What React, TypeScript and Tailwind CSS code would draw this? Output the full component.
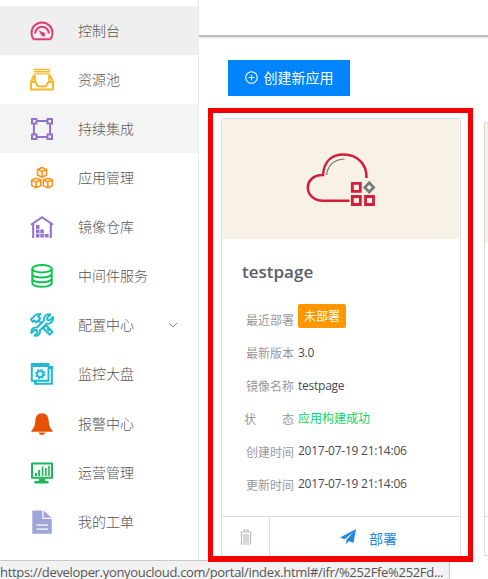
import type { ReactNode } from "react";

const line = { fill: "none", stroke: "currentColor", strokeWidth: 2 };

function Icon({ children, className }: { children: ReactNode; className: string }) {
  return (
    <svg viewBox="0 0 24 24" className={`h-6 w-6 shrink-0 ${className}`}>
      {children}
    </svg>
  );
}

const Cube = ({ x, y }: { x: number; y: number }) => (
  <path
    transform={`translate(${x} ${y})`}
    d="M5.2 .8 9.8 2.6V8.2L5.2 10.4.7 8.2V2.6ZM.7 2.6 5.2 4.700 9.8 2.6M5.2 4.700V10.200"
    fill="none"
    stroke="currentColor"
    strokeWidth="1.600"
    strokeLinejoin="round"
  />
);

const items: { label: string; bg?: string; arrow?: boolean; icon: ReactNode }[] = [
  {
    label: "控制台",
    bg: "bg-[#efefef]",
    icon: (
      <Icon className="text-[#df3f78]">
        <path {...line} d="M3.6 20.2A10.6 10.6 0 0 1 1.5 14a10.5 10.5 0 0 1 21 0 10.6 10.6 0 0 1-2.1 6.2Z" strokeLinejoin="round" />
        <path {...line} d="M5.2 14.500a6.8 6.8 0 0 1 13.6 0" />
        <path d="m8.5 11.2 4.6 2.1a2.1 2.1 0 1 1-1.9 2.8Z" fill="currentColor" />
      </Icon>
    ),
  },
  {
    label: "资源池",
    icon: (
      <Icon className="text-[#f5ba2b]">
        <path {...line} strokeWidth="1.4" d="M4 1.500h16M4 3.700h16M4 5.900h16" />
        <path {...line} d="M4.200 7 1 14v7.500h22V14L19.800 7M1 14h4.500c1 0 .8 4.500 4 4.500h5c3.200 0 3-4.500 4-4.500H23M4.800 7v6.500M19.200 7v6.500" strokeLinejoin="round" />
      </Icon>
    ),
  },
  {
    label: "持续集成",
    bg: "bg-[#f4f4f4]",
    icon: (
      <Icon className="text-[#9072cc]">
        <path {...line} d="M6.500 3.900h11M6.500 20h11M3.900 6.500v11M20.100 6.500v11" />
        <path {...line} d="M2 2h4.500v4.500H2ZM17.500 2H22v4.500h-4.500ZM2 17.500h4.500V22H2ZM17.500 17.500H22V22h-4.500Z" />
      </Icon>
    ),
  },
  {
    label: "应用管理",
    icon: (
      <Icon className="text-[#fa9317]">
        <Cube x={6.8} y={0.8} />
        <Cube x={1} y={11.4} />
        <Cube x={12.6} y={11.4} />
      </Icon>
    ),
  },
  {
    label: "镜像仓库",
    icon: (
      <Icon className="text-[#9072cc]">
        <path {...line} d="M1 9.800 12 2.200l11 7.600M3.200 9v14M20.800 9v14" />
        <path d="M6 10h3.500v3.700H6ZM6 14.600h3.500V18.200H6ZM10.300 14.600h3.500V18.200h-3.500ZM6 19.100h3.500v3.500H6ZM10.300 19.100h3.500v3.500h-3.500ZM14.700 19.100h3.900v3.500h-3.900Z" fill="currentColor" />
      </Icon>
    ),
  },
  {
    label: "中间件服务",
    icon: (
      <Icon className="text-[#0fc552]">
        <ellipse cx="12" cy="4.800" rx="9.700" ry="3.700" {...line} />
        <path {...line} d="M2.300 4.800v14.300c0 5 19.400 5 19.400 0V4.800M2.300 9.700c0 5 19.400 5 19.400 0M2.300 14.400c0 5 19.400 5 19.400 0" />
      </Icon>
    ),
  },
  {
    label: "配置中心",
    arrow: true,
    icon: (
      <Icon className="text-[#20b9d1]">
        <path {...line} strokeWidth="1.900" strokeLinejoin="round" d="M1 6.500 5.500 1.800 10.500 1 8.200 3.500l2 2-4 4-2-2-1.500 1.300ZM9 8l3 3M14.500 14l2-1.500 6 6.500-2.700 2.700-6.200-6ZM17 15.500l2.500 2.700" />
        <path {...line} strokeWidth="1.900" strokeLinejoin="round" d="M20.500 1.500 17 5l.5 2 2 .5L23 4c.5 4-2 7.300-6 6.500L9.800 17.500c.8 3.500-2 6-5.300 5.200L7.500 19.500 7 17.200l-2.300-.5L1.500 20c-.8-3.500 1.800-6.300 5.400-5.500L14 7.500c-.8-4 2.500-7 6.500-6Z" />
      </Icon>
    ),
  },
  {
    label: "监控大盘",
    icon: (
      <Icon className="text-[#20b9d1]">
        <path {...line} d="M1.800 2.200h16.700v16.600H1.800ZM5 21.800h16.800V5" />
        <path d="M1 1h18v4H1ZM19 4h4v3h-4ZM4 19h3v3.500H4Z" fill="currentColor" />
        <circle cx="10.200" cy="12" r="3.100" {...line} />
        <circle cx="10.200" cy="12" r="4.500" {...line} strokeWidth="1.400" strokeDasharray="1.900 1.634" />
      </Icon>
    ),
  },
  {
    label: "报警中心",
    icon: (
      <Icon className="text-[#e75106]">
        <path d="M12 1.300C7.500 1.300 5.500 4.800 5.300 9c-.2 4.500-1.300 6.500-4 10v.7h21.400V19c-2.700-3.500-3.800-5.500-4-10-.2-4.200-2.200-7.700-6.700-7.700ZM8.500 20.500c.3 1.600 2 2.500 3.500 2.500s3.200-.9 3.500-2.500Z" fill="currentColor" />
      </Icon>
    ),
  },
  {
    label: "运营管理",
    icon: (
      <Icon className="text-[#19b758]">
        <path {...line} d="M2 2.500h20v14.200H2Z" strokeLinejoin="round" />
        <path d="M5 12h2v3H5ZM8.200 9h2v6h-2ZM11.800 5.500h1.600V15h-1.600ZM15 7h1.600v8H15ZM18.200 4.800h1.600V15h-1.600ZM9 17.500h6v2.500h3.500v2.500h-14V20H9Z" fill="currentColor" />
      </Icon>
    ),
  },
  {
    label: "我的工单",
    icon: (
      <Icon className="text-[#a0a5d8]">
        <path d="M2.300.5h10V9h9.500v14.800h-19.500V.5ZM13.500.5l8 7.200h-8ZM6.500 14.500v1.200h11.500v-1.200ZM6.500 18.600v1.200h11.500v-1.200Z" fill="currentColor" fillRule="evenodd" />
      </Icon>
    ),
  },
];

function CloudLogo() {
  return (
    <svg viewBox="0 0 70 56" className="h-[56px] w-[70px]" fill="none">
      <path d="M43.500 49.700H16c-19-1-19-26 1-25.700C18 9 27 3.500 37.500 3.500c14 0 23.500 10 23 23.500" stroke="#d51c39" strokeWidth="2.500" />
      <path d="M20.500 24C22 14 28 8.500 38.500 8" stroke="#6b746b" strokeWidth="1.200" />
      <path d="M46.300 32.300h8v8h-8ZM46.300 45.500h8v8h-8ZM59.500 45.500h8v8h-8Z" stroke="#d51c39" strokeWidth="2.800" />
      <path d="m63.200 31.800 4.400 4.600-4.400 4.600-4.400-4.600Z" stroke="#777c78" strokeWidth="2.800" />
    </svg>
  );
}

function Row({ label, children }: { label: ReactNode; children: ReactNode }) {
  return (
    <div className="flex h-[33px] items-start text-[12px] leading-[18px]">
      <div className="w-[53px] shrink-0 pt-[2px] text-right text-[#999]">{label}</div>
      <div className="ml-1 tracking-[-0.24px] whitespace-nowrap text-[#444b55]">{children}</div>
    </div>
  );
}

export default function App() {
  return (
    <div className="relative flex h-[579px] w-[488px] overflow-hidden bg-white font-['Open_Sans','Noto_Sans_CJK_SC',sans-serif]">
      <nav className="h-full w-[199px] shrink-0 border-r border-[#ececec] pt-[6px]">
        {items.map((item) => (
          <div key={item.label} className={`flex h-[49.14px] items-center pl-[30px] ${item.bg ?? ""}`}>
            {item.icon}
            <span className="ml-6 w-[90px] text-[14px] leading-5 font-light text-[#555]">{item.label}</span>
            {item.arrow && (
              <svg viewBox="0 0 10 6" className="h-[6px] w-[10px]" fill="none" stroke="#888">
                <path d="m1 1 4 4 4-4" />
              </svg>
            )}
          </div>
        ))}
      </nav>

      <main className="min-w-0 flex-1">
        <header className="h-[37px] border-b-2 border-[#bdbdbd] bg-white shadow-[0_1px_2px_#ddd]" />
        <button className="mt-[23px] ml-[29px] flex h-9 w-[122px] items-center bg-[#0084ff] pb-px pl-[17px] text-[14px] text-white">
          <svg viewBox="0 0 14 14" className="mr-[5.5px] h-[13px] w-[13px]" fill="none" stroke="currentColor" strokeWidth="1.200">
            <circle cx="7" cy="7" r="6.200" />
            <path d="M7 4v6M4 7h6" />
          </svg>
          创建新应用
        </button>

        <div className="mt-[22px] ml-[22px] flex w-[500px] items-start gap-[23px]">
          <section className="flex h-[442px] w-[240px] shrink-0 flex-col rounded-t-[3px] border border-[#ddd]">
            <div className="flex h-[120px] items-center justify-center bg-[#f7f1e6]">
              <CloudLogo />
            </div>
            <h2 className="mt-[21px] ml-5 text-[17px] leading-6 font-semibold text-[#595e68]">testpage</h2>
            <div className="mt-[26px] ml-[19px] h-[206px]">
              <Row label="最近部署">
                <span className="-mt-[6px] flex h-6 w-12 items-center justify-center rounded-[2px] bg-[#ff9800] pt-px tracking-normal text-white">未部署</span>
              </Row>
              <Row label="最新版本"><span className="block pt-px">3.0</span></Row>
              <Row label="镜像名称"><span className="block pt-px">testpage</span></Row>
              <Row label={<span className="flex justify-between pl-[3px]"><span>状</span><span>态</span></span>}>
                <span className="block pt-px tracking-normal text-[#08d868]">应用构建成功</span>
              </Row>
              <Row label="创建时间">2017-07-19 21:14:06</Row>
              <Row label="更新时间">2017-07-19 21:14:06</Row>
            </div>
            <footer className="flex flex-1 border-t border-[#ddd]">
              <div className="flex w-12 justify-center border-r border-[#ddd] pt-3">
                <svg viewBox="0 0 12 16" className="h-4 w-3" fill="none" stroke="#bbb" strokeWidth="1.200">
                  <path d="M0 3h12M4 3V1h4v2M1.500 4v11h9V4M4 5v9M6 5v9M8 5v9" />
                </svg>
              </div>
              <div className="flex flex-1 pt-3 pl-[70px] text-[14px] leading-5 text-[#2388dd]">
                <svg viewBox="0 0 16 16" className="h-4 w-4">
                  <path d="M16 0 13.500 14 8.800 12 6.300 15.500V11L14 2.500 4.700 10.200 0 8.500Z" fill="currentColor" />
                </svg>
                <span className="ml-[13px]">部署</span>
              </div>
            </footer>
          </section>
          <section className="mt-1 h-[434px] w-[240px] shrink-0 border border-[#ddd]">
            <div className="h-[120px] bg-[#f7f1e6]" />
            <div className="h-[274px] border-b border-[#ddd]" />
          </section>
        </div>
      </main>

      <div className="absolute top-[560px] left-0 h-[19px] w-[450px] border-t border-r border-[#c8c8c8] bg-[#f2f2f2] pt-[3px] text-[13px] leading-[16px] tracking-[-0.32px] whitespace-nowrap text-[#555]">
        https://developer.yonyoucloud.com/portal/index.html#/ifr/%252Ffe%252Fd...
      </div>
      <div className="absolute top-[108px] left-[208px] h-[454px] w-[265px] border-[5px] border-b-[6px] border-[#f40000]" />
    </div>
  );
}
